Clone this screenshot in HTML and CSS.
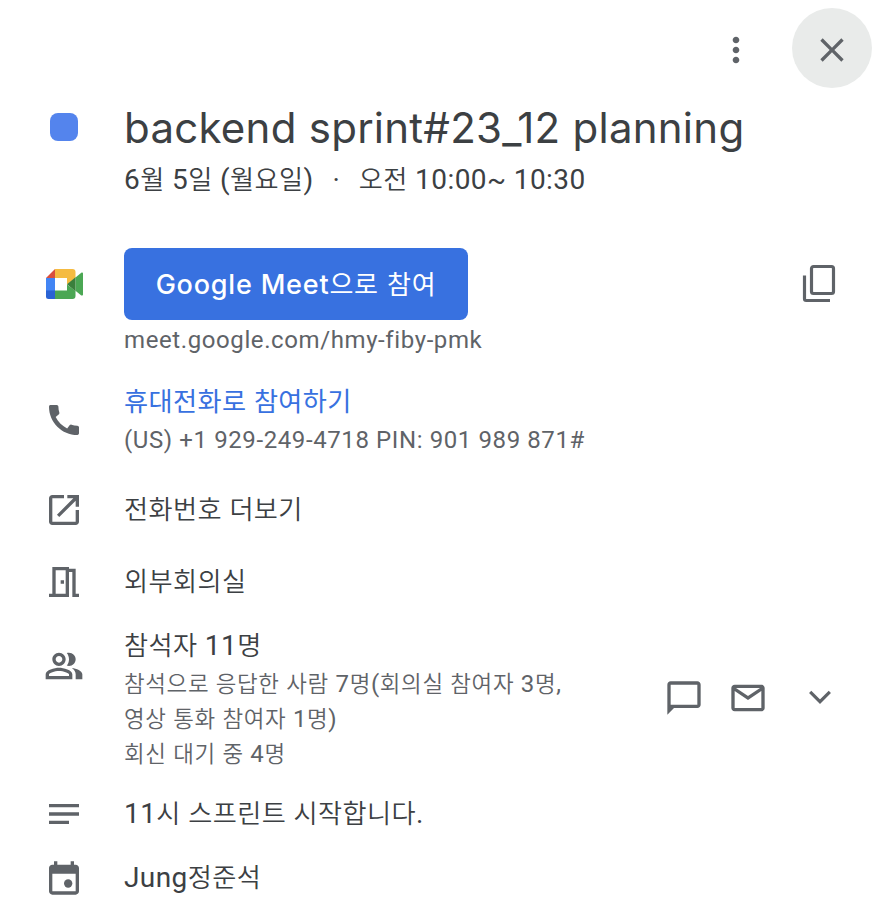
FILE: index.html
```html
<!DOCTYPE html>
<html lang="ko">
<head>
<meta charset="utf-8">
<title>backend sprint#23_12 planning</title>
<link rel="stylesheet" href="styles.css">
</head>
<body>
<main class="event">
  <header class="toolbar">
    <button class="tool" aria-label="옵션"><svg class="icon" viewBox="0 0 24 24"><path d="M12 8c1.1 0 2-.9 2-2s-.9-2-2-2-2 .9-2 2 .9 2 2 2zm0 2c-1.1 0-2 .9-2 2s.9 2 2 2 2-.9 2-2-.9-2-2-2zm0 6c-1.1 0-2 .9-2 2s.9 2 2 2 2-.9 2-2-.9-2-2-2z"/></svg></button>
    <button class="tool close" aria-label="닫기"><svg class="icon" viewBox="0 0 24 24"><path d="M19 6.41L17.59 5 12 10.59 6.41 5 5 6.41 10.59 12 5 17.59 6.41 19 12 13.41 17.59 19 19 17.59 13.41 12z"/></svg></button>
  </header>

  <section class="row heading">
    <div class="lead"><span class="swatch"></span></div>
    <div class="body">
      <h1 class="title">backend sprint#23_12 planning</h1>
      <p class="text date">6<span class="ko">월</span> 5<span class="ko">일</span> (<span class="ko">월요일</span>)<span class="dot">·</span><span class="ko">오전</span> 10:00~ 10:30</p>
    </div>
  </section>

  <section class="row meet">
    <div class="lead"><svg class="meet-logo" viewBox="0 0 37 30">
      <path fill="#4285f4" d="M0 9h9v13H0z"/>
      <path fill="#d94f3d" d="M9 0v9H0z"/>
      <path fill="#f5bb41" d="M9 0h17.500a3 3 0 0 1 3 3v6L21 15.500V9H9z"/>
      <path fill="#2a63d4" d="M0 21.500h9V30H2.500A2.500 2.500 0 0 1 0 27.500z"/>
      <path fill="#4ba754" d="M9 21.500h12v-6l8.500 6.500v5a3 3 0 0 1-3 3H9z"/>
      <path fill="#4ba754" d="M29.500 8.500l5.800-4.700c.7-.5 1.700-.1 1.700.8v21c0 .9-1 1.300-1.700.8l-5.800-4.700z"/>
      <path fill="#3a7f3c" d="M21 15.300l8.500-7v14z"/>
    </svg></div>
    <div class="body">
      <button class="join">Google Meet<span class="ko">으로 참여</span></button>
      <p class="note url">meet.google.com/hmy-fiby-pmk</p>
    </div>
    <svg class="icon outline copy" viewBox="0 0 24 24"><rect x="7.500" y="1.500" width="13.200" height="16.200" rx="1.200"/><path d="M3.300 6.900v14c0 .6.400 1 1 1h14.300"/></svg>
  </section>

  <section class="row phone">
    <div class="lead"><svg class="icon" viewBox="0 0 24 24"><path d="M20.010 15.380c-1.230 0-2.420-.2-3.530-.56-.35-.12-.74-.03-1.010.24l-1.570 1.970c-2.830-1.350-5.480-3.900-6.890-6.830l1.950-1.660c.27-.28.35-.67.24-1.020-.37-1.110-.56-2.300-.56-3.530 0-.54-.45-.99-.99-.99H4.190C3.650 3 3 3.240 3 3.990 3 13.280 10.730 21 20.010 21c.71 0 .99-.63.99-1.180v-3.450c0-.54-.45-.99-.99-.99z"/></svg></div>
    <div class="body">
      <a class="text link"><span class="ko">휴대전화로</span> <span class="ko">참여하기</span></a>
      <p class="note pin">(US) +1 929-249-4718 PIN: 901 989 871#</p>
    </div>
  </section>

  <section class="row more">
    <div class="lead"><svg class="icon" viewBox="0 0 24 24"><path d="M19 19H5V5h7V3H5c-1.110 0-2 .9-2 2v14c0 1.100.89 2 2 2h14c1.100 0 2-.9 2-2v-7h-2v7zM14 3v2h3.590l-9.830 9.830 1.410 1.410L19 6.410V10h2V3h-7z"/></svg></div>
    <p class="text body"><span class="ko">전화번호</span> <span class="ko">더보기</span></p>
  </section>

  <section class="row room">
    <div class="lead"><svg class="icon" viewBox="0 0 24 24"><path d="M19 19V4h-4V3H5v16H3v2h12V6h2v15h4v-2h-2zm-6 0H7V5h6v14zm-3-8h2v2h-2v-2z"/></svg></div>
    <p class="text body"><span class="ko">외부회의실</span></p>
  </section>

  <section class="row guests">
    <div class="lead"><svg class="icon" viewBox="0 0 24 24"><path d="M9 12c2.210 0 4-1.790 4-4s-1.790-4-4-4-4 1.790-4 4 1.790 4 4 4zm0-6c1.100 0 2 .9 2 2s-.9 2-2 2-2-.9-2-2 .9-2 2-2zM15 12c2.210 0 4-1.790 4-4s-1.790-4-4-4c-.47 0-.91.100-1.330.24C14.500 5.270 15 6.580 15 8s-.5 2.730-1.330 3.760c.42.14.86.24 1.330.24zM9 13c-2.670 0-8 1.340-8 4v3h16v-3c0-2.660-5.330-4-8-4zm6 5H3v-.99C3.200 16.290 6.300 15 9 15s5.800 1.290 6 2v1zM16.670 13.130C18.040 14.060 19 15.320 19 17v3h4v-3c0-2.180-3.580-3.470-6.330-3.870z"/></svg></div>
    <div class="body">
      <p class="text count"><span class="ko">참석자</span> 11<span class="ko">명</span></p>
      <p class="status"><span class="ko">참석으로</span> <span class="ko">응답한</span> <span class="ko">사람</span> 7<span class="ko">명</span>(<span class="ko">회의실</span> <span class="ko">참여자</span> 3<span class="ko">명</span>,</p>
      <p class="status"><span class="ko">영상</span> <span class="ko">통화</span> <span class="ko">참여자</span> 1<span class="ko">명</span>)</p>
      <p class="status"><span class="ko">회신</span> <span class="ko">대기</span> <span class="ko">중</span> 4<span class="ko">명</span></p>
    </div>
    <div class="actions">
      <svg class="icon" viewBox="0 0 24 24"><path d="M20 2H4c-1.100 0-1.990.9-1.990 2L2 22l4-4h14c1.100 0 2-.9 2-2V4c0-1.100-.9-2-2-2zM4 16V4h16v12H4z"/></svg>
      <svg class="icon" viewBox="0 0 24 24"><path d="M20 4H4c-1.100 0-2 .9-2 2v12c0 1.100.9 2 2 2h16c1.100 0 2-.9 2-2V6c0-1.100-.9-2-2-2zm-.8 2L12 10.800 4.800 6h14.400zM4 18V7.870l8 5.330 8-5.330V18H4z"/></svg>
      <svg class="icon outline chevron" viewBox="0 0 24 24"><path d="M6.100 8.300l5.900 5.900 5.900-5.900"/></svg>
    </div>
  </section>

  <section class="row description">
    <div class="lead"><svg class="icon" viewBox="0 0 24 24"><path d="M3 6h18v2H3zM3 11h18v2H3zM3 16h12v2H3z"/></svg></div>
    <p class="text body">11<span class="ko">시</span> <span class="ko">스프린트</span> <span class="ko">시작합니다</span>.</p>
  </section>

  <section class="row organizer">
    <div class="lead"><svg class="icon" viewBox="0 0 24 24"><path d="M19 4h-1V2h-2v2H8V2H6v2H5c-1.110 0-2 .9-2 2v14c0 1.100.89 2 2 2h14c1.100 0 2-.9 2-2V6c0-1.100-.9-2-2-2zm0 16H5V9.500h14V20z"/><circle cx="14.500" cy="15.300" r="2.500"/></svg></div>
    <p class="text body">Jung<span class="ko">정준석</span></p>
  </section>
</main>
</body>
</html>
```
FILE: styles.css
```css
* { box-sizing: border-box; }
body {
  margin: 0;
  background: #fff;
  color: #3c4043;
  font-family: Roboto, "Noto Sans CJK KR", sans-serif;
  -webkit-font-smoothing: antialiased;
}
h1, p { margin: 0; font-weight: 400; }
button { border: 0; padding: 0; background: none; font: inherit; }
.event { width: 874px; height: 918px; overflow: hidden; }
.icon { display: block; width: 40px; height: 40px; fill: #5f6368; flex: none; }
.outline { fill: none; stroke: #5f6368; stroke-width: 1.9; }
.ko {
  font-family: "Noto Sans CJK KR", sans-serif;
  font-size: 0.935em;
  font-weight: 350;
  line-height: 0;
}

.toolbar { display: flex; justify-content: flex-end; gap: 16px; height: 100px; padding: 8px 2px 0 0; }
.tool { display: flex; align-items: center; justify-content: center; width: 80px; height: 80px; padding-top: 4px; border-radius: 50%; }
.close { background: #e9ebea; }

.row { display: flex; padding-left: 44px; white-space: nowrap; }
.lead { display: flex; justify-content: center; flex: none; width: 40px; margin-right: 40px; }
.body { flex: 1; min-width: 0; }
.text { display: block; font-size: 28px; font-weight: 370; line-height: 40px; letter-spacing: 0.42px; }
.note { color: #5f6368; font-size: 24px; font-weight: 370; line-height: 36px; letter-spacing: 0.6px; }

.heading { height: 148px; }
.swatch { width: 28px; height: 28px; margin-top: 13px; border-radius: 8px; background: #5484ed; }
.title { font-family: Inter, sans-serif; font-size: 42px; line-height: 56px; letter-spacing: 0.26px; }
.date { margin-top: 4px; }
.dot { display: inline-block; width: 45px; text-align: center; }

.meet { height: 132px; }
.meet-logo { width: 37px; height: 30px; margin-top: 21px; }
.join {
  width: 344px;
  height: 72px;
  border-radius: 8px;
  background: #3871e0;
  color: #fff;
  font-family: Inter, sans-serif;
  font-size: 27px;
  font-weight: 500;
  letter-spacing: 0.8px;
}
.join .ko { font-size: 26px; font-weight: 400; }
.url { margin-top: 2px; }
.copy { margin: 16px 35px 0 0; }

.phone { height: 110px; }
.phone .lead { padding-top: 20px; }
.phone .body { padding-top: 2px; }
.link { color: #3871e0; }
.link .ko { font-weight: 400; }

.more { height: 72px; }
.room { height: 62px; }

.guests { height: 170px; }
.guests .lead { padding-top: 22px; }
.guests .body { padding-top: 2px; }
.count { margin-bottom: 1px; }
.status { color: #5f6368; font-size: 24px; font-weight: 370; line-height: 35px; letter-spacing: 0.65px; }
.actions { display: flex; gap: 24px; padding: 54px 34px 0 0; }
.chevron { margin-left: 8px; }

.description { height: 64px; }
```
